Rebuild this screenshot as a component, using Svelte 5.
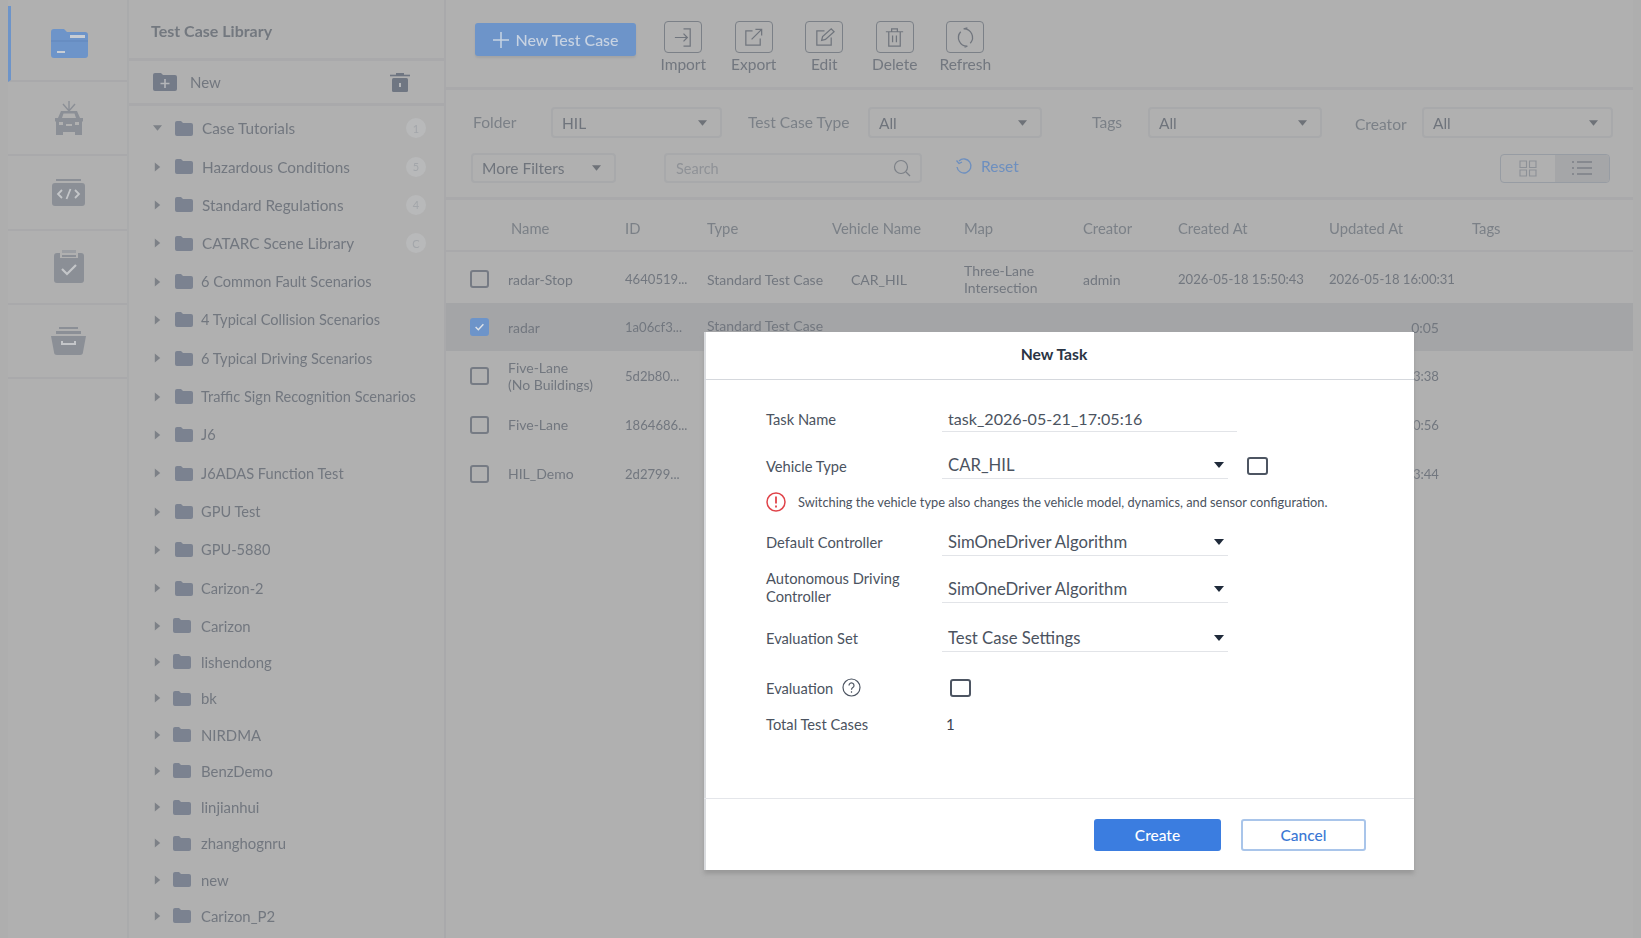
<script>
  const treeA = ['Case Tutorials','Hazardous Conditions','Standard Regulations','CATARC Scene Library','6 Common Fault Scenarios','4 Typical Collision Scenarios','6 Typical Driving Scenarios','Traffic Sign Recognition Scenarios','J6','J6ADAS Function Test','GPU Test','GPU-5880','Carizon-2'];
  const treeB = ['Carizon','lishendong','bk','NIRDMA','BenzDemo','linjianhui','zhanghognru','new','Carizon_P2'];
  const badges = ['1','5','4','C'];
  const rows = [
    { name:['radar-Stop'], id:'4640519...', type:'Standard Test Case', veh:'CAR_HIL', map:['Three-Lane','Intersection'], creator:'admin', created:'2026-05-18 15:50:43', updated:'2026-05-18 16:00:31', first:true },
    { name:['radar'], id:'1a06cf3...', type:'Standard Test Case', veh:'', map:[''], creator:'', created:'', updated:'0:05', picked:true, tail:true },
    { name:['Five-Lane','(No Buildings)'], id:'5d2b80...', type:'', veh:'', map:[''], creator:'', created:'', updated:'2026-05-18 16:03:38', shift:true },
    { name:['Five-Lane'], id:'1864686...', type:'', veh:'', map:[''], creator:'', created:'', updated:'2026-05-18 16:00:56', shift:true },
    { name:['HIL_Demo'], id:'2d2799...', type:'', veh:'', map:[''], creator:'', created:'', updated:'2026-05-18 16:03:44', shift:true }
  ];
</script>

{#snippet folder()}
  <svg class="tfolder" viewBox="0 0 18 15"><path d="M0 2a2 2 0 0 1 2-2h4l2 2h8a2 2 0 0 1 2 2v9a2 2 0 0 1-2 2H2a2 2 0 0 1-2-2z" fill="#7b8290"/></svg>
{/snippet}
{#snippet caret()}
  <svg class="caret" viewBox="0 0 10 6"><path d="M0 0h10L5 6z" fill="#6e7278"/></svg>
{/snippet}

<div class="app">
  <nav class="nav">
    <div class="navitem active">
      <svg width="37" height="29" viewBox="0 0 37 29"><path d="M0 3a3 3 0 0 1 3-3h10l3 3h18a3 3 0 0 1 3 3v20a3 3 0 0 1-3 3H3a3 3 0 0 1-3-3z" fill="#6d94c9"/><path d="M19 6h15v3H19zM6 22h8v2H6z" fill="#c8cdd4"/><path d="M0 12h37" stroke="#6286bb" stroke-width="1"/></svg>
    </div>
    <div class="navitem">
      <svg width="30" height="34" viewBox="0 0 30 34"><path d="M15 0v10M9 3l6 7 6-7" fill="none" stroke="#8b8f96" stroke-width="1.400"/><path d="M1 17h3l3-7h16l3 7h3v3l-1 1v13h-7v-3H9v3H2V21l-1-1z" fill="#8b8f96"/><path d="M8 17l1.500-4.500h11L22 17z" fill="#b0b0b0"/><rect x="5" y="21" width="4" height="3" fill="#b0b0b0"/><rect x="21" y="21" width="4" height="3" fill="#b0b0b0"/><rect x="12" y="23" width="6" height="2" fill="#b0b0b0"/></svg>
    </div>
    <div class="navitem">
      <svg width="33" height="27" viewBox="0 0 33 27"><path d="M4 0h25v2H4z" fill="#8b8f96"/><rect y="4" width="33" height="23" rx="3" fill="#8b8f96"/><path d="M10 11l-4 4 4 4M23 11l4 4-4 4M18.500 10l-4 10" fill="none" stroke="#c4c6c9" stroke-width="1.800"/></svg>
    </div>
    <div class="navitem">
      <svg width="30" height="33" viewBox="0 0 30 33"><path d="M8 0h14v3H8z" fill="#9b9ea3"/><path d="M8 5h14v2H8z" fill="#8b8f96"/><path d="M3 3h3v5h18V3h3a3 3 0 0 1 3 3v24a3 3 0 0 1-3 3H3a3 3 0 0 1-3-3V6a3 3 0 0 1 3-3z" fill="#8b8f96"/><path d="M8 19l5 5 9-9" fill="none" stroke="#c4c6c9" stroke-width="2.200"/></svg>
    </div>
    <div class="navitem">
      <svg width="35" height="28" viewBox="0 0 35 28"><path d="M8 0h19v2H8zM5 4h25v3H5z" fill="#8b8f96"/><path d="M0 9h35l-3 16a3 3 0 0 1-3 3H6a3 3 0 0 1-3-3z" fill="#8b8f96"/><path d="M11 14v3h13v-3" fill="none" stroke="#c4c6c9" stroke-width="2"/></svg>
    </div>
  </nav>

  <aside class="lib">
    <div class="libtitle">Test Case Library</div>
    <div class="libnew">
      <svg width="24" height="18" viewBox="0 0 24 18"><path d="M0 2a2 2 0 0 1 2-2h6l2 2h12a2 2 0 0 1 2 2v12a2 2 0 0 1-2 2H2a2 2 0 0 1-2-2z" fill="#747b88"/><path d="M12 6v9M7.500 10.500h9" stroke="#b4b6b9" stroke-width="1.600"/></svg>
      <span class="newlabel">New</span>
      <svg class="libtrash" width="20" height="19" viewBox="0 0 20 19"><path d="M0 2.500h20" stroke="#6f7682" stroke-width="1.600"/><path d="M6 0h8v2H6z" fill="#6f7682"/><rect x="2" y="5" width="16" height="14" rx="1.500" fill="#6f7682"/><path d="M10 10v4" stroke="#b4b6b9" stroke-width="2"/></svg>
    </div>
    <div class="tree">
      {#each treeA as t, i}
        <div class="node a" class:wide={i < 4}>
          {#if i === 0}
            <svg class="tarrow" viewBox="0 0 10 10"><path d="M0 2h10L5 8z" fill="#7d8187"/></svg>
          {:else}
            <svg class="tarrow" viewBox="0 0 10 10"><path d="M2 0l6 5-6 5z" fill="#7d8187"/></svg>
          {/if}
          {@render folder()}
          <span class="tname">{t}</span>
          {#if i < 4}<span class="badge">{badges[i]}</span>{/if}
        </div>
      {/each}
      {#each treeB as t}
        <div class="node b">
          <svg class="tarrow" viewBox="0 0 10 10"><path d="M2 0l6 5-6 5z" fill="#7d8187"/></svg>
          {@render folder()}
          <span class="tname">{t}</span>
        </div>
      {/each}
    </div>
  </aside>

  <main class="main">
    <div class="toolbar">
      <button class="newbtn"><svg width="18" height="18" viewBox="0 0 18 18"><path d="M9 1v16M1 9h16" stroke="#c8d3e2" stroke-width="1.500"/></svg>New Test Case</button>
      <div class="tool"><span class="toolbox"><svg viewBox="0 0 24 24"><path d="M12 3h7v18h-7M3 12h13M12 8l4 4-4 4" fill="none" stroke="#70757d" stroke-width="1.300"/></svg></span>Import</div>
      <div class="tool"><span class="toolbox"><svg viewBox="0 0 24 24"><path d="M11 5H4v15h15v-7M10 14L20 4M14 3.500h6.500V10" fill="none" stroke="#70757d" stroke-width="1.300"/></svg></span>Export</div>
      <div class="tool"><span class="toolbox"><svg viewBox="0 0 24 24"><path d="M12 5H4v15h15v-8M9 15l1-4 9-8 3 3-9 8z" fill="none" stroke="#70757d" stroke-width="1.300"/></svg></span>Edit</div>
      <div class="tool"><span class="toolbox"><svg viewBox="0 0 24 24"><path d="M3 6h18M9 6V3h6v3M6 6v15h12V6M10 10v7M14 10v7" fill="none" stroke="#70757d" stroke-width="1.300"/></svg></span>Delete</div>
      <div class="tool"><span class="toolbox"><svg viewBox="0 0 24 24"><path d="M7 6a9 9 0 0 0 7 15M17 18A9 9 0 0 0 10 3M10 3l4-1M14 21l-3 1" fill="none" stroke="#70757d" stroke-width="1.300"/></svg></span>Refresh</div>
    </div>

    <div class="filters">
      <div class="frow one">
        <span class="flabel w78">Folder</span>
        <div class="sel w171">HIL{@render caret()}</div>
        <span class="flabel ml26 w120">Test Case Type</span>
        <div class="sel w174">All{@render caret()}</div>
        <span class="flabel ml50 w56">Tags</span>
        <div class="sel w174">All{@render caret()}</div>
        <span class="flabel ml33 w67 low">Creator</span>
        <div class="sel w191">All{@render caret()}</div>
      </div>
      <div class="frow two">
        <div class="sel w145">More Filters{@render caret()}</div>
        <div class="search"><span>Search</span><svg width="18" height="18" viewBox="0 0 18 18"><circle cx="8" cy="8" r="6.500" fill="none" stroke="#7c8087" stroke-width="1.200"/><path d="M13 13l4 4" stroke="#7c8087" stroke-width="1.200"/></svg></div>
        <div class="reset"><svg width="18" height="18" viewBox="0 0 18 18"><path d="M4 4a7 7 0 1 1-2 6M1.500 3.500L4 6.500l3-1.500" fill="none" stroke="#6d8fbf" stroke-width="1.300"/></svg>Reset</div>
        <div class="toggle">
          <span class="tg"><svg width="18" height="17" viewBox="0 0 18 17"><path d="M1 1h6.500v6.500H1zM10.500 1H17v6.500h-6.500zM1 10h6.500v6H1zM10.500 10H17v6h-6.500z" fill="none" stroke="#8d9197" stroke-width="1.100"/></svg></span>
          <span class="tg on"><svg width="20" height="16" viewBox="0 0 20 16"><path d="M5 2h15M5 8h15M5 14h15M0 2h2M0 8h2M0 14h2" stroke="#7c8087" stroke-width="1.400"/></svg></span>
        </div>
      </div>
    </div>

    <div class="thead tr">
      <span></span><span class="hname">Name</span><span>ID</span><span>Type</span><span>Vehicle Name</span><span>Map</span><span>Creator</span><span>Created At</span><span>Updated At</span><span>Tags</span>
    </div>
    {#each rows as r}
      <div class="trow tr" class:picked={r.picked} class:first={r.first}>
        <span class="cb" class:checked={r.picked}>
          {#if r.picked}<svg viewBox="0 0 18 18"><path d="M4 9l3.500 3.500L14 5.500" fill="none" stroke="#dfe3e8" stroke-width="1.800"/></svg>{/if}
        </span>
        <span class="lines">{#each r.name as l}<span>{l}</span>{/each}</span>
        <span class="num">{r.id}</span>
        <span class="rtype">{r.type}</span>
        <span class="veh">{r.veh}</span>
        <span class="lines">{#each r.map as l}<span>{l}</span>{/each}</span>
        <span>{r.creator}</span>
        <span class="num">{r.created}</span>
        <span class="num" class:shift={r.shift} class:tail={r.tail}>{r.updated}</span>
        <span></span>
      </div>
    {/each}
  </main>

  <div class="modal">
    <div class="mhead">New Task</div>
    <div class="mbody">
      <div class="mrow task">
        <span class="mlabel">Task Name</span>
        <div class="ctl name">task_2026-05-21_17:05:16</div>
      </div>
      <div class="mrow vehicle">
        <span class="mlabel">Vehicle Type</span>
        <div class="ctl">CAR_HIL<svg class="mcaret" viewBox="0 0 10 6"><path d="M0 0h10L5 6z" fill="#1f2a3a"/></svg></div>
        <span class="mcb side"></span>
      </div>
      <div class="warn">
        <svg width="20" height="20" viewBox="0 0 20 20"><circle cx="10" cy="10" r="9" fill="none" stroke="#e0444a" stroke-width="1.500"/><path d="M10 4.500v7M10 13.500v2" stroke="#e0444a" stroke-width="1.800"/></svg>
        <span>Switching the vehicle type also changes the vehicle model, dynamics, and sensor configuration.</span>
      </div>
      <div class="mrow def">
        <span class="mlabel">Default Controller</span>
        <div class="ctl">SimOneDriver Algorithm<svg class="mcaret" viewBox="0 0 10 6"><path d="M0 0h10L5 6z" fill="#1f2a3a"/></svg></div>
      </div>
      <div class="mrow auto">
        <span class="mlabel up">Autonomous Driving<br />Controller</span>
        <div class="ctl">SimOneDriver Algorithm<svg class="mcaret" viewBox="0 0 10 6"><path d="M0 0h10L5 6z" fill="#1f2a3a"/></svg></div>
      </div>
      <div class="mrow evset">
        <span class="mlabel">Evaluation Set</span>
        <div class="ctl">Test Case Settings<svg class="mcaret" viewBox="0 0 10 6"><path d="M0 0h10L5 6z" fill="#1f2a3a"/></svg></div>
      </div>
      <div class="mrow ev">
        <span class="mlabel evl">Evaluation
          <svg width="19" height="19" viewBox="0 0 19 19"><circle cx="9.500" cy="9.500" r="8.500" fill="none" stroke="#4d5562" stroke-width="1.200"/><path d="M7 7.500a2.500 2.500 0 1 1 3.800 2.100c-.9.600-1.300 1-1.300 2.100M9.500 13.300v1.500" fill="none" stroke="#4d5562" stroke-width="1.200"/></svg>
        </span>
        <span class="mcb"></span>
      </div>
      <div class="mrow total">
        <span class="mlabel">Total Test Cases</span>
        <span class="totalv">1</span>
      </div>
    </div>
    <div class="mfoot">
      <button class="create">Create</button>
      <button class="cancel">Cancel</button>
    </div>
  </div>
</div>

<style>
  :global(body) { margin: 0; background: #aeaeae; }
  .app { position: relative; display: flex; width: 1641px; height: 938px; overflow: hidden; padding: 0 8px; box-sizing: border-box; background: #aeaeae; font-family: Lato, "Noto Sans", sans-serif; font-size: 14px; color: #72777f; }
  .nav, .lib, .main { filter: blur(0.4px); }
  .nav { width: 121px; box-sizing: border-box; flex: none; background: #b0b0b0; border-right: 2px solid #aaabac; padding-top: 6px; }
  .navitem { display: flex; align-items: center; justify-content: center; height: 74px; border-bottom: 2px solid #a9a9ab; padding-left: 2px; }
  .navitem.active { border-left: 3px solid #6d94c9; padding-left: 0; }
  .navitem + .navitem { height: 72.300px; }
  .lib { width: 317px; box-sizing: border-box; flex: none; background: #b0b0b0; border-right: 2px solid #a9a9ab; }
  .libtitle { height: 61px; box-sizing: border-box; padding: 2px 0 0 22px; display: flex; align-items: center; font-weight: 700; font-size: 16px; color: #73787f; border-bottom: 3px solid #a9a9ab; }
  .libnew { height: 42px; display: flex; align-items: center; padding: 0 34px 0 24px; border-bottom: 3px solid #a9a9ab; }
  .newlabel { margin-left: 13px; font-size: 15px; }
  .libtrash { margin-left: auto; }
  .tree { padding-top: 3px; }
  .node { display: flex; align-items: center; padding-left: 24px; }
  .node.a { height: 38.350px; font-size: 14.600px; }
  .node.b { height: 36.300px; font-size: 14.900px; }
  .node.wide { font-size: 15.300px; }
  .tarrow { width: 9px; height: 10px; flex: none; }
  .tfolder { width: 18px; height: 15px; flex: none; }
  .a .tfolder { margin-left: 13px; }
  .b .tfolder { margin-left: 11px; }
  .a .tname { margin-left: 8px; }
  .wide .tname { margin-left: 9px; }
  .b .tname { margin-left: 10px; }
  .badge { margin-left: auto; margin-right: 18px; width: 20px; height: 20px; border-radius: 50%; background: #b8b9ba; color: #a3a6aa; font-size: 11px; display: flex; align-items: center; justify-content: center; }
  .main { flex: 1; background: #b0b0b0; min-width: 0; }
  .toolbar { height: 90px; box-sizing: border-box; display: flex; padding: 21px 0 0 29px; border-bottom: 3px solid #a9a9ab; }
  .newbtn { width: 161px; height: 33px; margin-top: 2px; display: flex; align-items: center; justify-content: center; gap: 5px; border: 0; border-radius: 3px; background: #6d94c9; color: #c8d3e2; font: 500 16px Lato, sans-serif; box-shadow: 0 2px 2px #a3a4a6; }
  .tool { width: 70.500px; display: flex; flex-direction: column; align-items: center; font-size: 15.500px; }
  .newbtn + .tool { margin-left: 12px; }
  .toolbox { width: 38px; height: 32px; border: 1.500px solid #7b8087; border-radius: 4px; box-sizing: border-box; display: flex; align-items: center; justify-content: center; margin-bottom: 2px; }
  .toolbox svg { width: 23px; height: 23px; }
  .filters { height: 110px; box-sizing: border-box; padding-top: 17px; border-bottom: 3px solid #a9a9ab; }
  .frow { display: flex; align-items: center; }
  .frow.one { padding-left: 27px; height: 31px; font-size: 15.600px; }
  .frow.two { padding: 0 23px 0 25px; height: 30px; margin-top: 15px; }
  .flabel { flex: none; color: #7b8087; margin-top: -1px; }
  .low { margin-top: 2px; }
  .w78 { width: 78px; } .w120 { width: 120px; } .w56 { width: 56px; } .w67 { width: 67px; }
  .ml26 { margin-left: 26px; } .ml50 { margin-left: 50px; } .ml33 { margin-left: 33px; }
  .w171 { width: 171px; } .w174 { width: 174px; } .w191 { width: 191px; } .w145 { width: 145px; }
  .sel { flex: none; height: 100%; box-sizing: border-box; border: 2px solid #a8a9ab; border-radius: 4px; display: flex; align-items: center; justify-content: space-between; padding: 0 13px 0 9px; font-size: 15.500px; color: #6f747c; }
  .caret { width: 9px; height: 6px; }
  .search { flex: none; width: 258px; height: 100%; box-sizing: border-box; margin-left: 48px; border: 2px solid #a8a9ab; border-radius: 4px; display: flex; align-items: center; justify-content: space-between; padding: 0 9px 0 10px; color: #8f9297; font-size: 14.500px; }
  .reset { margin-left: 33px; display: flex; align-items: center; gap: 8px; color: #6d8fbf; margin-top: -4px; font-size: 15.500px; }
  .toggle { margin-left: auto; width: 110px; height: 29px; display: flex; border: 1px solid #979ca3; border-radius: 4px; box-sizing: border-box; overflow: hidden; }
  .tg { flex: 1; display: flex; align-items: center; justify-content: center; }
  .tg.on { background: #a5a6a8; }
  .tr { display: grid; grid-template-columns: 62px 117px 82px 125px 132px 119px 95px 151px 143px 1fr; align-items: center; }
  .thead { height: 52px; box-sizing: border-box; border-bottom: 2px solid #a9a9ab; font-size: 14.800px; color: #7b8087; padding-top: 5px; }
  .hname { padding-left: 3px; }
  .trow { height: 49px; font-size: 14px; }
  .trow.first { height: 51px; box-sizing: border-box; padding-top: 3px; }
  .trow.picked { background: #a4a5a7; height: 48px; }
  .trow.picked .rtype { margin-top: -3px; }
  .cb { margin-left: 24px; width: 19px; height: 18px; box-sizing: border-box; border: 2px solid #767b84; border-radius: 3px; display: block; }
  .cb.checked { background: #6d94c9; border-color: #6d94c9; }
  .cb svg { width: 15px; height: 14px; display: block; }
  .lines { display: flex; flex-direction: column; line-height: 17px; }
  .veh { padding-left: 19px; }
  .num { font-size: 13.100px; white-space: nowrap; }
  .shift { margin-left: -16px; }
  .tail { width: 110px; text-align: right; font-size: 14px; }
  .modal { position: absolute; left: 704px; top: 332px; width: 710px; height: 538px; background: #fff; color: #3b4350; box-shadow: 0 4px 4px #9a9a9a, inset 2px 0 #d9dbde; display: flex; flex-direction: column; font-size: 14px; }
  .mhead { height: 48px; flex: none; box-sizing: border-box; border-bottom: 1.500px solid #d5d8dd; display: flex; align-items: center; justify-content: center; padding: 0 10px 4px 0; font-weight: 700; font-size: 15.700px; color: #2a3444; }
  .mbody { flex: 1; padding: 0 0 0 62px; }
  .mrow { display: flex; align-items: center; }
  .mlabel { width: 176px; flex: none; color: #4b5360; line-height: 18px; font-size: 14.700px; }
  .up { margin-top: -4px; }
  .ctl { width: 286px; height: 27px; box-sizing: border-box; padding: 0 4px 0 6px; border-bottom: 1.500px solid #e2e4e8; display: flex; align-items: center; justify-content: space-between; font-size: 16.700px; color: #4b5360; }
  .ctl.name { width: 295px; font-size: 16.100px; }
  .mcaret { width: 10px; height: 6px; }
  .task { margin-top: 25px; height: 27px; }
  .vehicle { margin-top: 20px; height: 27px; }
  .warn { display: flex; align-items: center; gap: 12px; margin-top: 13px; height: 20px; font-size: 12.800px; color: #4b5360; }
  .def { margin-top: 16.500px; height: 27px; }
  .auto { margin-top: 20px; height: 27px; }
  .evset { margin-top: 22.400px; height: 27px; }
  .ev { margin-top: 26px; height: 20px; }
  .total { margin-top: 16px; height: 20px; }
  .mcb { width: 21px; height: 18px; box-sizing: border-box; border: 2px solid #4d5562; border-radius: 3px; flex: none; }
  .mcb.side { margin-left: 19px; }
  .ev .mcb { margin-left: 8px; }
  .evl { display: flex; align-items: center; gap: 9px; }
  .totalv { margin-left: 4px; font-size: 15px; }
  .mfoot { height: 72px; flex: none; box-sizing: border-box; border-top: 1px solid #e4e6ea; display: flex; align-items: flex-start; gap: 20px; padding: 20px 48px 0 0; justify-content: flex-end; }
  .create, .cancel { height: 32px; border-radius: 3px; font: 500 15.500px Lato, sans-serif; }
  .create { width: 127px; background: #3b7de0; color: #fff; border: 0; }
  .cancel { width: 125px; background: #fff; color: #3b78d4; border: 2px solid #a9c5ea; }
</style>
